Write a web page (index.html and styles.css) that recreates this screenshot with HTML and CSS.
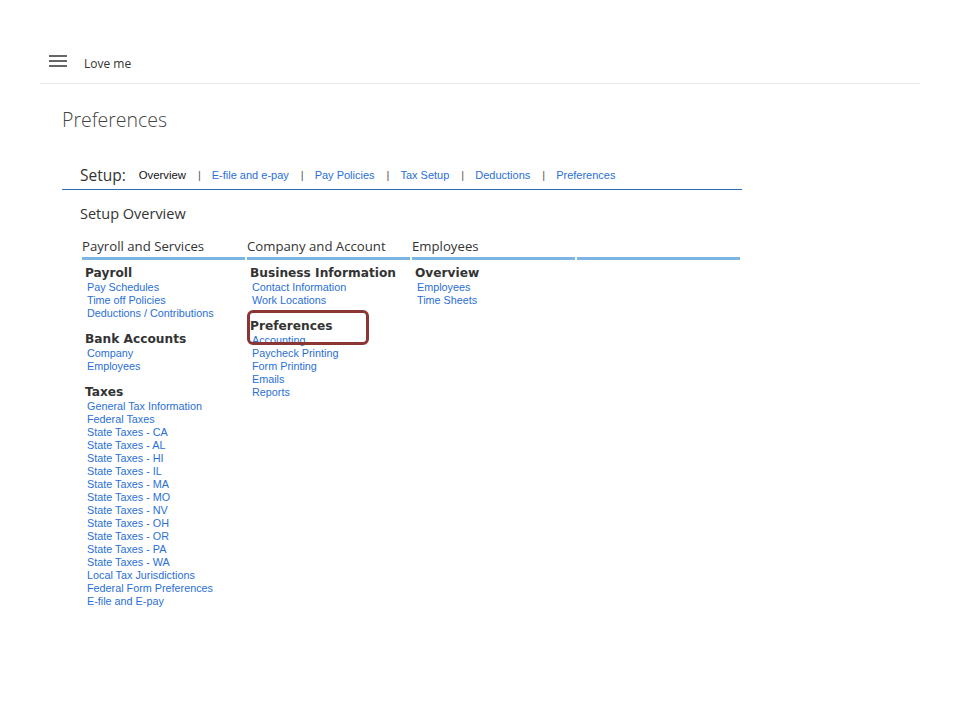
FILE: index.html
```html
<!DOCTYPE html>
<html>
<head>
<meta charset="utf-8">
<link rel="stylesheet" href="styles.css">
</head>
<body>
<div class="page">
  <header class="topbar">
    <svg class="menu" width="18" height="14" viewBox="0 0 18 14"><rect x="0" y="1" width="18" height="2" fill="#666"/><rect x="0" y="6" width="18" height="2" fill="#666"/><rect x="0" y="11" width="18" height="2" fill="#666"/></svg>
    <span class="company">Love me</span>
  </header>
  <main class="content">
    <h1 class="title">Preferences</h1>
    <nav class="setupnav">
      <span class="setup-label">Setup:</span>
      <span class="current">Overview</span><span class="sep">|</span>
      <a>E-file and e-pay</a><span class="sep">|</span>
      <a>Pay Policies</a><span class="sep">|</span>
      <a>Tax Setup</a><span class="sep">|</span>
      <a>Deductions</a><span class="sep">|</span>
      <a>Preferences</a>
    </nav>
    <h2 class="overview">Setup Overview</h2>
    <div class="grid">
      <div class="col">
        <div class="colhead">Payroll and Services</div>
        <div class="group">
          <div class="ghead">Payroll</div>
          <a>Pay Schedules</a><a>Time off Policies</a><a>Deductions / Contributions</a>
        </div>
        <div class="group">
          <div class="ghead">Bank Accounts</div>
          <a>Company</a><a>Employees</a>
        </div>
        <div class="group">
          <div class="ghead">Taxes</div>
          <a>General Tax Information</a><a>Federal Taxes</a><a>State Taxes - CA</a><a>State Taxes - AL</a><a>State Taxes - HI</a><a>State Taxes - IL</a><a>State Taxes - MA</a><a>State Taxes - MO</a><a>State Taxes - NV</a><a>State Taxes - OH</a><a>State Taxes - OR</a><a>State Taxes - PA</a><a>State Taxes - WA</a><a>Local Tax Jurisdictions</a><a>Federal Form Preferences</a><a>E-file and E-pay</a>
        </div>
      </div>
      <div class="col">
        <div class="colhead">Company and Account</div>
        <div class="group">
          <div class="ghead">Business Information</div>
          <a>Contact Information</a><a>Work Locations</a>
        </div>
        <div class="group highlight-wrap">
          <div class="highlight"></div>
          <div class="ghead">Preferences</div>
          <a>Accounting</a><a>Paycheck Printing</a><a>Form Printing</a><a>Emails</a><a>Reports</a>
        </div>
      </div>
      <div class="col">
        <div class="colhead">Employees</div>
        <div class="group">
          <div class="ghead">Overview</div>
          <a>Employees</a><a>Time Sheets</a>
        </div>
      </div>
      <div class="col">
        <div class="colhead">&nbsp;</div>
      </div>
    </div>
  </main>
</div>
</body>
</html>
```
FILE: styles.css
```css
html, body { margin: 0; padding: 0; background: #fff; }
body { font-family: "Liberation Sans", Arial, sans-serif; color: #333; }
.page { padding: 40px 40px 0 40px; }
.topbar {
  height: 43px;
  border-bottom: 1px solid #e6e8eb;
  display: flex;
  align-items: center;
  padding-left: 9px;
}
.menu { display: block; margin-top: -2px; }
.company {
  font-family: "Open Sans", sans-serif;
  font-size: 12px;
  color: #333;
  margin-left: 17px;
  margin-top: 3px;
}
.content { padding-left: 22px; }
.title {
  margin: 22px 0 0 0;
  font-family: "Open Sans", sans-serif;
  font-weight: 300;
  font-size: 19.5px;
  color: #444;
  line-height: 28px;
}
.setupnav {
  width: 662px;
  margin-top: 28px;
  padding-left: 18px;
  padding-bottom: 2px;
  border-bottom: 1px solid #2f6db5;
  height: 25px;
  display: flex;
  align-items: center;
  font-size: 11px;
}
.setup-label {
  font-family: "Open Sans", sans-serif;
  font-size: 15.5px;
  color: #333;
  margin-right: 13px;
}
.current { color: #111; font-size: 11.3px; }
.sep { color: #555; margin: 0 11px 0 12px; }
.setupnav a { color: #2a6fd6; }
.overview {
  margin: 14px 0 0 18px;
  font-family: "Open Sans", sans-serif;
  font-weight: 400;
  font-size: 14.5px;
  color: #333;
  line-height: 20px;
}
.grid {
  margin: 12px 0 0 20px;
  display: grid;
  grid-template-columns: repeat(4, 163px);
  column-gap: 2px;
}
.colhead {
  font-family: "Open Sans", sans-serif;
  font-size: 13.2px;
  color: #333;
  height: 21px;
  line-height: 21px;
  border-bottom: 3px solid #7cb4e4;
}
.group {
  display: flex;
  flex-direction: column;
  padding-left: 5px;
  margin-bottom: 11px;
}
.colhead + .group { margin-top: 5px; }
.ghead {
  font-family: "DejaVu Sans", Verdana, sans-serif;
  font-weight: bold;
  font-size: 12.2px;
  color: #333;
  line-height: 16px;
  margin-left: -2px;
}
.group a {
  font-size: 10.8px;
  line-height: 13px;
  color: #2a6fd6;
}
.highlight-wrap { position: relative; }
.highlight {
  position: absolute;
  left: 0;
  top: -8px;
  width: 116px;
  height: 29px;
  border: 3px solid #8b3535;
  border-radius: 6px;
}
```
